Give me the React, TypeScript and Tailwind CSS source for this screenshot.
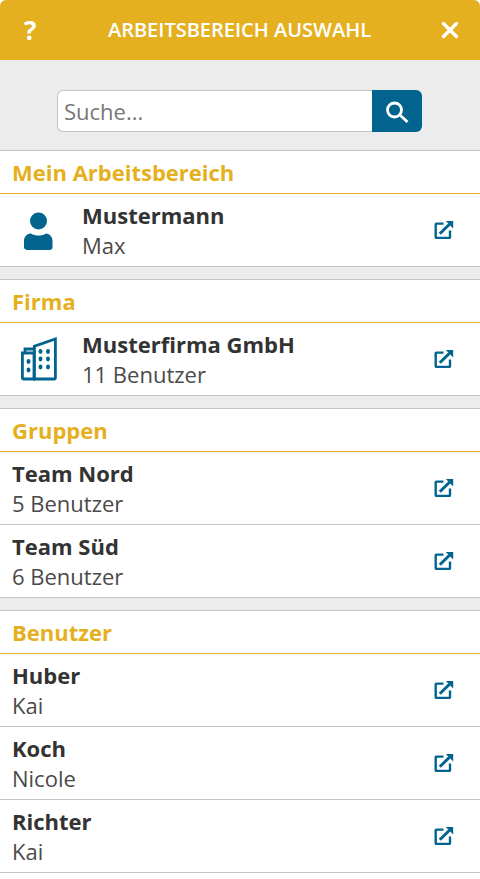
import React from "react";

const Ext = () => (
  <svg width="20" height="20" viewBox="0 0 20 20" fill="none" className="shrink-0">
    <path d="M9.500 3.600H2.400a.7.7 0 0 0-.7.7v12.900a.7.7 0 0 0 .7.7h12.900a.7.7 0 0 0 .7-.7V10.500" stroke="#00648f" strokeWidth="2.400" />
    <path d="M5.800 13.800 15.500 4.200" stroke="#00648f" strokeWidth="3" />
    <path d="M11.800 1h7.400v7.400z" fill="#00648f" />
  </svg>
);

const Row = ({ a, b, icon }: { a: string; b: string; icon?: React.ReactNode }) => (
  <div className="h-[73px] border-b border-[#c4c4c4] bg-white flex items-center pl-3 pr-[26px]">
    {icon && <div className="w-[70px] shrink-0 flex">{icon}</div>}
    <div className="flex-1 min-w-0 flex flex-col pt-[2px]">
      <div className="text-[22px] leading-[29px] font-bold text-[#333333]">{a}</div>
      <div className="text-[22px] leading-[31px] font-normal text-[#4a4a4a]">{b}</div>
    </div>
    <Ext />
  </div>
);

const Section = ({ title, children }: { title: string; children: React.ReactNode }) => (
  <section className="border-t border-[#c4c4c4] bg-white mb-3 last:mb-0">
    <div className="h-[43px] border-b border-[#e5b020] flex items-center px-3 text-[22px] font-bold text-[#e5b020]">{title}</div>
    {children}
  </section>
);

const User = () => (
  <svg width="30" height="40" viewBox="0 0 30 40" className="ml-[12px]" fill="#00648f">
    <circle cx="14.500" cy="11" r="8.500" />
    <path d="M7 23.500c2 1.500 5 2 7.500 2s5.500-.5 7.500-2c4 .5 6.500 3.500 6.500 7.500v6c0 2-1 3-3 3h-22c-2 0-3.500-1-3.500-3v-6c0-4 2.500-7 6.500-7.500z" />
  </svg>
);

const Building = () => (
  <svg width="36" height="44" viewBox="0 0 36 44" className="ml-[9px]" fill="none" stroke="#00648f" strokeWidth="2.800">
    <path d="M1.400 16h11.600V42H2.400a1 1 0 0 1-1-1z" />
    <path d="M4 15.500V12h9" />
    <path d="M13.400 42V9.200L34.400 2v39a1 1 0 0 1-1 1H12" />
    <g fill="#00648f" stroke="none">
      <ellipse cx="7.500" cy="24.500" rx="2" ry="2.400" /><ellipse cx="7.500" cy="33" rx="2" ry="2.400" />
      <ellipse cx="19.500" cy="14.500" rx="2" ry="2.400" /><ellipse cx="27" cy="14.500" rx="2" ry="2.400" />
      <ellipse cx="19.500" cy="22" rx="2" ry="2.400" /><ellipse cx="27" cy="22" rx="2" ry="2.400" />
      <ellipse cx="19.500" cy="30" rx="2" ry="2.400" /><ellipse cx="27" cy="30" rx="2" ry="2.400" />
    </g>
  </svg>
);

export default function App() {
  return (
    <div className="w-[480px] h-[879px] overflow-hidden bg-white font-['Open_Sans',sans-serif]">
      <header className="h-[60px] bg-[#e5b020] rounded-t-md flex items-center text-white pl-6 pr-[21px]">
        <span className="w-[12px] text-[26px] font-bold leading-none">?</span>
        <h1 className="flex-1 text-center text-[20px] font-semibold pl-[2px]">ARBEITSBEREICH AUSWAHL</h1>
        <svg width="18" height="18" viewBox="0 0 18 18" stroke="white" strokeWidth="3.400" strokeLinecap="round">
          <path d="M2.500 2.500l13 13M15.500 2.500l-13 13" />
        </svg>
      </header>
      <div className="h-[90px] bg-[#ececec] flex justify-center pt-[30px]">
        <div className="flex h-[42px] w-[365px] mr-[1px]">
          <div className="flex-1 bg-white border border-[#c4c4c4] border-r-0 rounded-l-md flex items-center px-[6px] text-[22px] text-[#777777]">Suche...</div>
          <div className="w-[50px] bg-[#00648f] rounded-r-md flex items-center justify-center">
            <svg width="24" height="24" viewBox="0 0 24 24" fill="none" stroke="white">
              <circle cx="9.500" cy="11" r="7" strokeWidth="2.800" />
              <path d="M15.500 16.500 22.500 23" strokeWidth="2.800" />
            </svg>
          </div>
        </div>
      </div>
      <div className="bg-[#ececec]">
        <Section title="Mein Arbeitsbereich"><Row a="Mustermann" b="Max" icon={<User />} /></Section>
        <Section title="Firma"><Row a="Musterfirma GmbH" b="11 Benutzer" icon={<Building />} /></Section>
        <Section title="Gruppen">
          <Row a="Team Nord" b="5 Benutzer" />
          <Row a="Team Süd" b="6 Benutzer" />
        </Section>
        <Section title="Benutzer">
          <Row a="Huber" b="Kai" />
          <Row a="Koch" b="Nicole" />
          <Row a="Richter" b="Kai" />
        </Section>
      </div>
    </div>
  );
}
